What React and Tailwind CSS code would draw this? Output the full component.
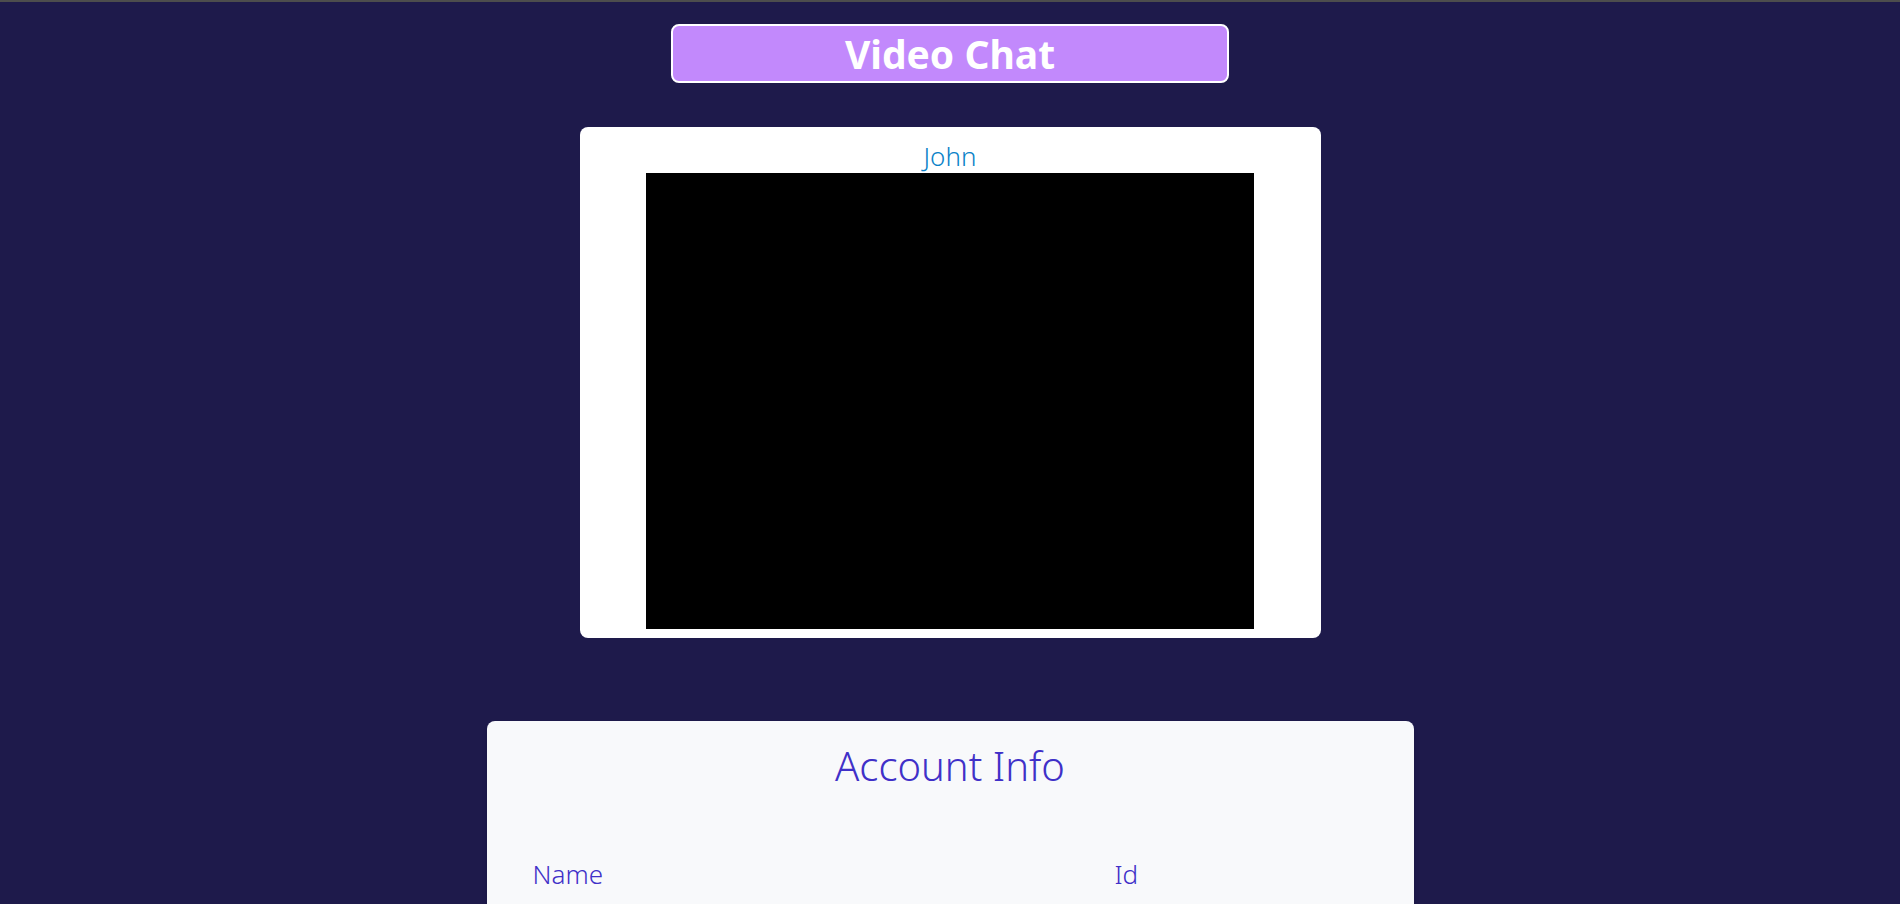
import React from "react";

const VideoChat = () => {
  return (
    <div
      className="min-h-screen bg-[#1e1a4b] flex flex-col items-center"
      style={{ fontFamily: '"Noto Sans", "Open Sans", sans-serif' }}
    >
      <div className="w-full h-[2px] bg-[#4d4d4d]" />

      {/* header */}
      <div className="mt-[22px] w-[558px] h-[59px] bg-[#c289fc] border-2 border-white rounded-lg flex items-center justify-center">
        <h1 className="text-[39px] leading-none font-bold text-white">Video Chat</h1>
      </div>

      {/* video tile */}
      <div className="mt-[44px] w-[741px] bg-white rounded-lg flex flex-col items-center pt-[12px] pb-[9px]">
        <p className="text-[26px] leading-[34px] font-light text-[#0a82c8]">John</p>
        <div className="w-[608px] h-[456px] bg-black" />
      </div>

      {/* account */}
      <div className="mt-[83px] w-[927px] bg-[#f8f9fb] rounded-lg px-[46px] pt-[19px] pb-10 shadow-md">
        <h2 className="text-center text-[40px] leading-[52px] font-light text-[#4030c8]">Account Info</h2>
        <div className="mt-[63px] grid grid-cols-[582px_1fr] text-[26px] font-light text-[#4030c8]">
          <span>Name</span>
          <span>Id</span>
        </div>
      </div>
    </div>
  );
};

export default function App() {
  return <VideoChat />;
}
